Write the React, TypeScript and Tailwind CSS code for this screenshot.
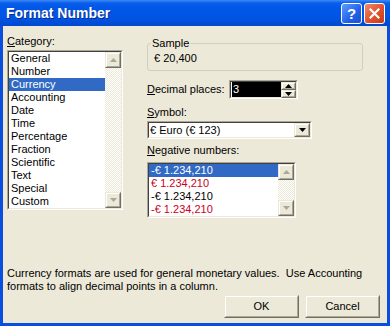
import React from "react";

const categories = [
  "General",
  "Number",
  "Currency",
  "Accounting",
  "Date",
  "Time",
  "Percentage",
  "Fraction",
  "Scientific",
  "Text",
  "Special",
  "Custom",
];

const negatives = [
  { text: "-€ 1.234,210", red: false },
  { text: "€ 1.234,210", red: true },
  { text: "-€ 1.234,210", red: false },
  { text: "-€ 1.234,210", red: true },
];

// classic sunken 3d frame used by list boxes and edits
const Sunken = ({ className, children }: { className?: string; children: React.ReactNode }) => (
  <div className={`border border-t-[#ACA899] border-l-[#ACA899] border-b-white border-r-white ${className ?? ""}`}>
    <div className="w-full h-full border border-t-[#404040] border-l-[#404040] border-b-[#ECE9D8] border-r-[#ECE9D8] bg-white flex">
      {children}
    </div>
  </div>
);

const Raised = ({ className, children }: { className?: string; children?: React.ReactNode }) => (
  <div className={`border border-t-[#ECE9D8] border-l-[#ECE9D8] border-b-[#716F64] border-r-[#716F64] ${className ?? ""}`}>
    <div className="w-full h-full border border-t-white border-l-white border-b-[#ACA899] border-r-[#ACA899] bg-[#ECE9D8] flex items-center justify-center">
      {children}
    </div>
  </div>
);

const Arrow = ({ up, color = "#ACA899" }: { up?: boolean; color?: string }) => (
  <svg width="7" height="4" viewBox="0 0 7 4">
    {up ? <path d="M3.5 0 L7 4 L0 4 Z" fill={color} /> : <path d="M0 0 L7 0 L3.5 4 Z" fill={color} />}
  </svg>
);

const ScrollBar = () => (
  <div className="w-[16px] h-full flex flex-col">
    <Raised className="h-[16px] w-[16px]">
      <Arrow up />
    </Raised>
    <div className="flex-1 bg-[repeating-conic-gradient(#ffffff_0_25%,#ECE9D8_0_50%)] bg-[length:2px_2px]" />
    <Raised className="h-[16px] w-[16px]">
      <Arrow />
    </Raised>
  </div>
);

const U = ({ children }: { children: React.ReactNode }) => <span className="underline underline-offset-[1px]">{children}</span>;

export default function App() {
  return (
    <div className="w-[390px] h-[326px] flex flex-col bg-[#0A4EDF] font-['Liberation_Sans',Arial,sans-serif] text-[11px] leading-[13px] text-black select-none">
      {/* title bar */}
      <div className="h-[26px] flex items-center pl-[6px] pr-[5px] bg-[linear-gradient(to_bottom,#3D8BF7_0px,#0A5EEA_3px,#0058E8_8px,#0054E3_18px,#0048CF_26px)]">
        <span className="text-white font-bold text-[14px] [text-shadow:1px_1px_0_#0A2A8A]">Format Number</span>
        <div className="ml-auto flex gap-[2px]">
          <div className="w-[21px] h-[21px] rounded-[3px] border border-white bg-[linear-gradient(135deg,#5E9BFF,#2260E8_60%,#1A50D0)] flex items-center justify-center text-white font-bold text-[15px] leading-none">
            ?
          </div>
          <div className="w-[21px] h-[21px] rounded-[3px] border border-white bg-[linear-gradient(135deg,#F08C6C,#E0502C_55%,#C83C18)] flex items-center justify-center">
            <svg width="11" height="11" viewBox="0 0 11 11">
              <path d="M1.5 1.5 L9.5 9.5 M9.5 1.5 L1.5 9.5" stroke="white" strokeWidth="2.2" strokeLinecap="square" />
            </svg>
          </div>
        </div>
      </div>

      {/* client area */}
      <div className="flex-1 mx-[3px] mb-[3px] bg-[#ECE9D8] flex flex-col">
        <div className="flex pt-[9px]">
          {/* category */}
          <div className="ml-[4px] w-[116px] flex flex-col">
            <div className="h-[13px] mb-[2px]">
              <U>C</U>ategory:
            </div>
            <Sunken className="h-[160px]">
              <div className="flex-1 flex flex-col">
                {categories.map((c) => (
                  <div
                    key={c}
                    className={`h-[13px] pl-[2px] ${c === "Currency" ? "bg-[#316AC5] text-white" : ""}`}
                  >
                    {c}
                  </div>
                ))}
              </div>
              <ScrollBar />
            </Sunken>
          </div>

          {/* right column */}
          <div className="ml-[24px] w-[216px] flex flex-col">
            <fieldset className="border border-[#D0D0BF] rounded-[3px] pl-[6px] pb-[5px] h-[34px] mt-[2px]">
              <legend className="ml-[-3px] px-[1px]">Sample</legend>
              <div className="mt-[2px]">€ 20,400</div>
            </fieldset>

            <div className="flex items-center mt-[9px]">
              <div className="w-[82px]">
                <U>D</U>ecimal places:
              </div>
              <Sunken className="w-[69px] h-[19px]">
                <div className="flex-1 flex items-center pl-[1px]">
                  <div className="bg-black text-white h-[15px] flex-1 leading-[15px] pl-[1px]">3</div>
                </div>
                <div className="w-[15px] flex flex-col">
                  <Raised className="flex-1">
                    <Arrow up color="#000" />
                  </Raised>
                  <Raised className="flex-1">
                    <Arrow color="#000" />
                  </Raised>
                </div>
              </Sunken>
            </div>

            <div className="mt-[7px] mb-[2px]">
              <U>S</U>ymbol:
            </div>
            <Sunken className="w-[165px] h-[18px]">
              <div className="flex-1 flex items-center pl-[1px]">€ Euro (€ 123)</div>
              <Raised className="w-[16px]">
                <Arrow color="#000" />
              </Raised>
            </Sunken>

            <div className="mt-[5px] mb-[5px]">
              <U>N</U>egative numbers:
            </div>
            <Sunken className="w-[149px] h-[56px]">
              <div className="flex-1 flex flex-col">
                {negatives.map((n, i) => (
                  <div
                    key={i}
                    className={`h-[13px] pl-[2px] ${i === 0 ? "bg-[#316AC5] text-white" : n.red ? "text-[#CC0022]" : ""}`}
                  >
                    {n.text}
                  </div>
                ))}
              </div>
              <ScrollBar />
            </Sunken>
          </div>
        </div>

        <div className="mt-auto pl-[4px] pr-[4px]">
          <p>Currency formats are used for general monetary values.&nbsp; Use Accounting</p>
          <p>formats to align decimal points in a column.</p>
        </div>
        <div className="flex justify-end gap-[6px] pr-[7px] pt-[2px] pb-[5px]">
          <Raised className="w-[75px] h-[23px]">OK</Raised>
          <Raised className="w-[75px] h-[23px]">Cancel</Raised>
        </div>
      </div>
    </div>
  );
}
